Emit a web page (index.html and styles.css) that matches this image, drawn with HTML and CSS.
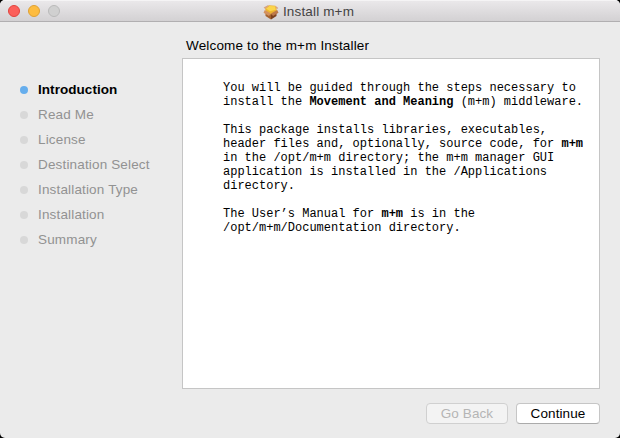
FILE: index.html
```html
<!DOCTYPE html>
<html lang="en">
<head>
<meta charset="utf-8">
<title>Install m+m</title>
<link rel="stylesheet" href="styles.css">
</head>
<body>
<div class="window">
  <header class="titlebar">
    <div class="lights"><i class="light close"></i><i class="light minimize"></i><i class="light disabled"></i></div>
    <div class="title">
      <svg class="package" viewBox="0 0 16 16" aria-hidden="true">
        <path d="M2.5 8 8 10v5.5L2.5 12z" fill="#a4622f"/>
        <path d="M13.5 8 8 10v5.5l5.5-3.5z" fill="#7d421f"/>
        <path d="M2 4.5 6 1.2l6.500.6L14 7 8 10.500 3 8z" fill="#edb52f"/>
        <path d="M3 4.500 6.500 2l5.500.3.8 3.400-5.800 1.500z" fill="#fbd54c"/>
        <path d="M1.800 6 7.800 9.500 6 12 .5 8.800z" fill="#d3915d"/>
        <path d="M14.200 6 8 9.500l2 2.500 5.500-3.200z" fill="#bd7949"/>
        <path d="M2.200 5 .6 3.600 4.800 1.300l1.200.5zM13.800 5.300l1.500-1.300-2.500-2-.5.500z" fill="#d9a47c"/>
      </svg>
      <span>Install m+m</span>
    </div>
  </header>
  <div class="body">
    <ul class="steps">
      <li class="current"><span>Introduction</span></li>
      <li><span>Read Me</span></li>
      <li><span>License</span></li>
      <li><span>Destination Select</span></li>
      <li><span>Installation Type</span></li>
      <li><span>Installation</span></li>
      <li><span>Summary</span></li>
    </ul>
    <main class="main">
      <h1><span>Welcome to the m+m Installer</span></h1>
      <section class="pane">
        <p>You will be guided through the steps necessary to<br>install the <b>Movement and Meaning</b> (m+m) middleware.</p>
        <p>This package installs libraries, executables,<br>header files and, optionally, source code, for <b>m+m</b><br>in the /opt/m+m directory; the m+m manager GUI<br>application is installed in the /Applications<br>directory.</p>
        <p>The User’s Manual for <b>m+m</b> is in the<br>/opt/m+m/Documentation directory.</p>
      </section>
      <footer class="actions">
        <button class="back" disabled>Go Back</button>
        <button class="continue">Continue</button>
      </footer>
    </main>
  </div>
</div>
</body>
</html>
```

FILE: styles.css
```css
* { box-sizing: border-box; }
body { margin: 0; background: #000; font: 13.5px/16px "Liberation Sans", Arial, sans-serif; letter-spacing: .16px; }
.window { width: 620px; height: 438px; background: #ebebeb; border-radius: 5px; overflow: hidden; display: flex; flex-direction: column; }
.titlebar { height: 22px; flex: none; display: grid; grid-template-columns: 100px 1fr 100px; align-items: center; background: linear-gradient(#eae8ea, #d3d1d3); border-top: 1px solid #f5f4f5; border-bottom: 1px solid #b1afb1; }
.lights { display: flex; gap: 8px; padding-left: 8px; }
.light { width: 12px; height: 12px; border-radius: 50%; border: 1px solid; }
.close { background: #fc605b; border-color: #e0443e; }
.minimize { background: #fdbc40; border-color: #dea034; }
.disabled { background: #d0d0d0; border-color: #b9b9b9; }
.title { display: flex; justify-content: center; align-items: center; gap: 4px; color: #444; margin-left: -3px; padding-top: 1px; }
.package { width: 16px; height: 16px; }
.body { flex: 1; display: flex; }
.steps { width: 182px; margin: 0; padding: 55px 0 0 20px; list-style: none; color: #929292; }
.steps li { height: 25px; display: flex; align-items: center; gap: 10px; }
.steps li::before { content: ""; width: 8px; height: 8px; border-radius: 50%; background: #d8d8d8; margin-top: 1px; }
.steps .current { color: #000; font-weight: bold; letter-spacing: .05px; }
.steps .current::before { background: #66aeed; }
.main { width: 418px; display: flex; flex-direction: column; }
h1 { margin: 0; height: 36px; padding: 16px 0 0 4px; font-size: 13.5px; line-height: 16px; font-weight: normal; color: #000; }
.pane { height: 331px; background: #fff; border: 1px solid #c5c5c5; padding: 22px 0 0 40px; font: 12px/14px "Liberation Mono", "Courier New", monospace; letter-spacing: 0; color: #000; white-space: nowrap; }
.pane p { margin: 0 0 14px; }
.actions { display: flex; justify-content: flex-end; gap: 8px; padding-top: 14px; }
button { height: 21px; padding: 0; border: 1px solid #c6c6c6; border-bottom-color: #ababab; border-radius: 4px; background: #fff; color: #000; font: 13.5px/17px "Liberation Sans", Arial, sans-serif; letter-spacing: .1px; }
.continue { width: 84px; }
.back { width: 82px; background: #f3f3f3; border-color: #d0d0d0; color: #b5b5b5; }
```
